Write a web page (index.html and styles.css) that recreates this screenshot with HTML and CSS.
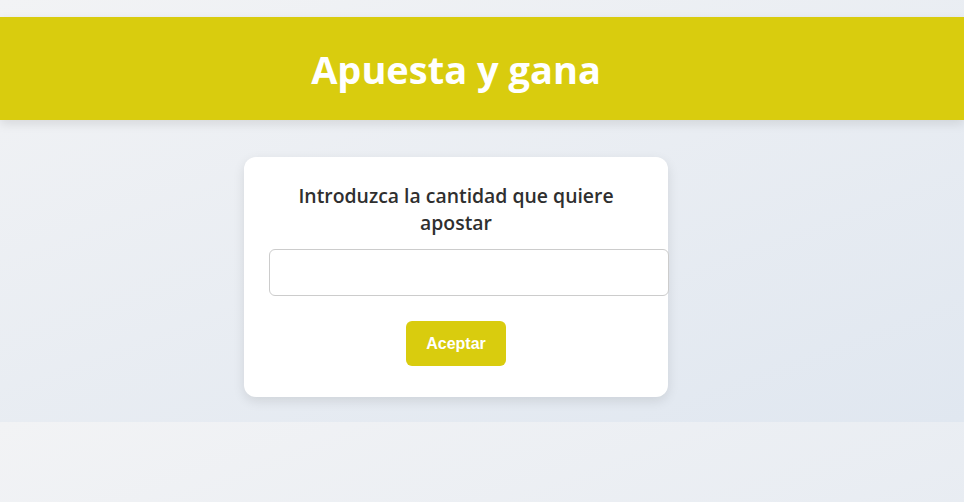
FILE: index.html
```html
<!DOCTYPE html>
<html lang="es">
<head>
<meta charset="utf-8">
<title>Apuesta y gana</title>
<link rel="stylesheet" href="styles.css">
</head>
<body>
<header class="banner">
  <h1 class="banner-title">Apuesta y gana</h1>
</header>
<main class="content">
  <form class="card">
    <h2 class="card-title">Introduzca la cantidad que quiere apostar</h2>
    <input class="amount" type="text">
    <button class="accept" type="button">Aceptar</button>
  </form>
</main>
</body>
</html>
```
FILE: styles.css
```css
body {
  margin: 0;
  padding-top: 17px;
  font-family: "Open Sans", "Noto Sans", sans-serif;
  background: linear-gradient(160deg, #f2f3f5 0%, #e0e7f0 100%);
}

.banner {
  background: #d9cc0e;
  height: 103px;
  padding-right: 52px;
  display: flex;
  align-items: center;
  justify-content: center;
  box-shadow: 0 4px 10px rgba(0, 0, 0, 0.1);
}

.banner-title {
  margin: 0;
  color: #ffffff;
  font-size: 38px;
  font-weight: 700;
  line-height: 1;
}

.content {
  display: flex;
  justify-content: center;
  padding: 37px 52px 25px 0;
}

.card {
  width: 374px;
  background: #ffffff;
  border-radius: 12px;
  padding: 25px 25px 31px;
  box-shadow: 0 4px 12px rgba(0, 0, 0, 0.1);
  display: flex;
  flex-direction: column;
  align-items: flex-start;
}

.card-title {
  align-self: stretch;
  margin: 0 0 13px;
  text-align: center;
  font-size: 19.4px;
  font-weight: 600;
  line-height: 27px;
  color: #2f2f2f;
}

.amount {
  width: 100%;
  height: 21px;
  padding: 12px;
  border: 1px solid #cccccc;
  border-radius: 6px;
  font-size: 16px;
  margin: 0;
}

.accept {
  align-self: center;
  margin-top: 25px;
  padding: 13px 20px;
  border: none;
  border-radius: 6px;
  background: #d9cc0e;
  color: #ffffff;
  font-family: "Liberation Sans", Arial, sans-serif;
  font-weight: 700;
  font-size: 16px;
  line-height: 19px;
}
```
